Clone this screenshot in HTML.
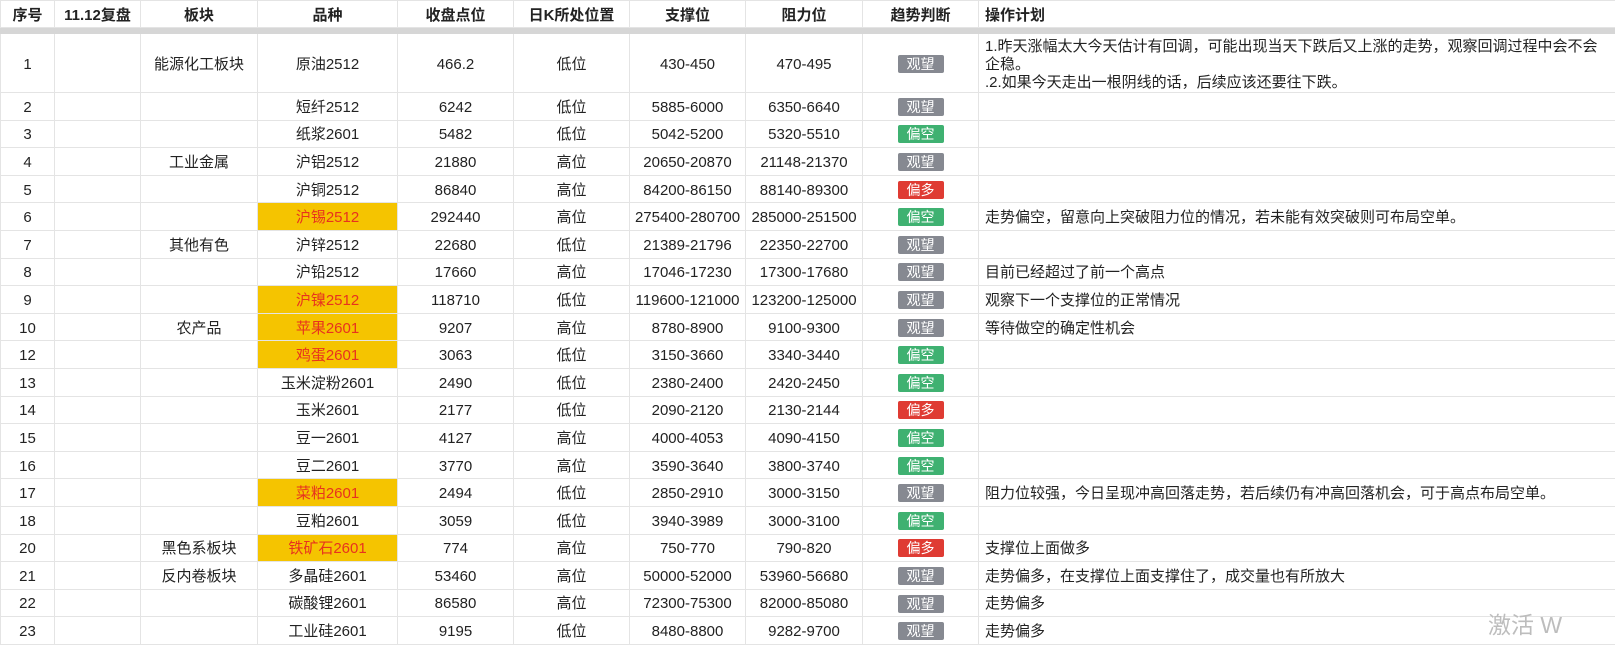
<!DOCTYPE html>
<html><head><meta charset="utf-8">
<style>
html,body{margin:0;padding:0;background:#fff;}
body{width:1615px;height:645px;overflow:hidden;position:relative;font-family:"Liberation Sans","Noto Sans CJK SC",sans-serif;color:#222;}
table{border-collapse:collapse;table-layout:fixed;width:1615px;font-size:15px;}
td,th{border:1px solid #e4e4e4;text-align:center;padding:3px 0 0 0;white-space:nowrap;overflow:hidden;line-height:18px;vertical-align:middle;}
th{height:23px;font-weight:bold;font-size:15px;color:#222;}
th.l,td.l{text-align:left;padding-left:6px;}
tr.sep td{height:5px;padding:0;background:#d6d6d6;border-color:#d6d6d6;line-height:0;font-size:0;}
tr.r td{height:23.6px;}
tr.r1 td{height:55px;}
td.plan{white-space:normal;line-height:18px;font-size:15px;}
.y{background:#f5c400;color:#e8321e;}
.b{display:inline-block;width:46px;height:18px;line-height:18px;border-radius:2px;color:#fff;font-size:14px;vertical-align:middle;position:relative;top:-1px;}
.g{background:#868991}.gr{background:#3fb171}.rd{background:#df3b33}
.wm{position:absolute;left:1488px;top:606px;font-size:23px;color:#bdbdbd;}
</style></head><body>
<table>
<colgroup><col style="width:54px"><col style="width:86px"><col style="width:117px"><col style="width:140px"><col style="width:116px"><col style="width:116px"><col style="width:116px"><col style="width:117px"><col style="width:116px"><col style="width:637px"></colgroup>
<tr><th>序号</th><th>11.12复盘</th><th>板块</th><th>品种</th><th>收盘点位</th><th>日K所处位置</th><th>支撑位</th><th>阻力位</th><th>趋势判断</th><th class="l">操作计划</th></tr>
<tr class="sep"><td></td><td></td><td></td><td></td><td></td><td></td><td></td><td></td><td></td><td></td></tr>
<tr class="r r1"><td>1</td><td></td><td>能源化工板块</td><td>原油2512</td><td>466.2</td><td>低位</td><td>430-450</td><td>470-495</td><td><span class="b g">观望</span></td><td class="l plan">1.昨天涨幅太大今天估计有回调，可能出现当天下跌后又上涨的走势，观察回调过程中会不会<br>企稳。<br>.2.如果今天走出一根阴线的话，后续应该还要往下跌。</td></tr>
<tr class="r"><td>2</td><td></td><td></td><td>短纤2512</td><td>6242</td><td>低位</td><td>5885-6000</td><td>6350-6640</td><td><span class="b g">观望</span></td><td class="l"></td></tr>
<tr class="r"><td>3</td><td></td><td></td><td>纸浆2601</td><td>5482</td><td>低位</td><td>5042-5200</td><td>5320-5510</td><td><span class="b gr">偏空</span></td><td class="l"></td></tr>
<tr class="r"><td>4</td><td></td><td>工业金属</td><td>沪铝2512</td><td>21880</td><td>高位</td><td>20650-20870</td><td>21148-21370</td><td><span class="b g">观望</span></td><td class="l"></td></tr>
<tr class="r"><td>5</td><td></td><td></td><td>沪铜2512</td><td>86840</td><td>高位</td><td>84200-86150</td><td>88140-89300</td><td><span class="b rd">偏多</span></td><td class="l"></td></tr>
<tr class="r"><td>6</td><td></td><td></td><td class="y">沪锡2512</td><td>292440</td><td>高位</td><td>275400-280700</td><td>285000-251500</td><td><span class="b gr">偏空</span></td><td class="l">走势偏空，留意向上突破阻力位的情况，若未能有效突破则可布局空单。</td></tr>
<tr class="r"><td>7</td><td></td><td>其他有色</td><td>沪锌2512</td><td>22680</td><td>低位</td><td>21389-21796</td><td>22350-22700</td><td><span class="b g">观望</span></td><td class="l"></td></tr>
<tr class="r"><td>8</td><td></td><td></td><td>沪铅2512</td><td>17660</td><td>高位</td><td>17046-17230</td><td>17300-17680</td><td><span class="b g">观望</span></td><td class="l">目前已经超过了前一个高点</td></tr>
<tr class="r"><td>9</td><td></td><td></td><td class="y">沪镍2512</td><td>118710</td><td>低位</td><td>119600-121000</td><td>123200-125000</td><td><span class="b g">观望</span></td><td class="l">观察下一个支撑位的正常情况</td></tr>
<tr class="r"><td>10</td><td></td><td>农产品</td><td class="y">苹果2601</td><td>9207</td><td>高位</td><td>8780-8900</td><td>9100-9300</td><td><span class="b g">观望</span></td><td class="l">等待做空的确定性机会</td></tr>
<tr class="r"><td>12</td><td></td><td></td><td class="y">鸡蛋2601</td><td>3063</td><td>低位</td><td>3150-3660</td><td>3340-3440</td><td><span class="b gr">偏空</span></td><td class="l"></td></tr>
<tr class="r"><td>13</td><td></td><td></td><td>玉米淀粉2601</td><td>2490</td><td>低位</td><td>2380-2400</td><td>2420-2450</td><td><span class="b gr">偏空</span></td><td class="l"></td></tr>
<tr class="r"><td>14</td><td></td><td></td><td>玉米2601</td><td>2177</td><td>低位</td><td>2090-2120</td><td>2130-2144</td><td><span class="b rd">偏多</span></td><td class="l"></td></tr>
<tr class="r"><td>15</td><td></td><td></td><td>豆一2601</td><td>4127</td><td>高位</td><td>4000-4053</td><td>4090-4150</td><td><span class="b gr">偏空</span></td><td class="l"></td></tr>
<tr class="r"><td>16</td><td></td><td></td><td>豆二2601</td><td>3770</td><td>高位</td><td>3590-3640</td><td>3800-3740</td><td><span class="b gr">偏空</span></td><td class="l"></td></tr>
<tr class="r"><td>17</td><td></td><td></td><td class="y">菜粕2601</td><td>2494</td><td>低位</td><td>2850-2910</td><td>3000-3150</td><td><span class="b g">观望</span></td><td class="l">阻力位较强，今日呈现冲高回落走势，若后续仍有冲高回落机会，可于高点布局空单。</td></tr>
<tr class="r"><td>18</td><td></td><td></td><td>豆粕2601</td><td>3059</td><td>低位</td><td>3940-3989</td><td>3000-3100</td><td><span class="b gr">偏空</span></td><td class="l"></td></tr>
<tr class="r"><td>20</td><td></td><td>黑色系板块</td><td class="y">铁矿石2601</td><td>774</td><td>高位</td><td>750-770</td><td>790-820</td><td><span class="b rd">偏多</span></td><td class="l">支撑位上面做多</td></tr>
<tr class="r"><td>21</td><td></td><td>反内卷板块</td><td>多晶硅2601</td><td>53460</td><td>高位</td><td>50000-52000</td><td>53960-56680</td><td><span class="b g">观望</span></td><td class="l">走势偏多，在支撑位上面支撑住了，成交量也有所放大</td></tr>
<tr class="r"><td>22</td><td></td><td></td><td>碳酸锂2601</td><td>86580</td><td>高位</td><td>72300-75300</td><td>82000-85080</td><td><span class="b g">观望</span></td><td class="l">走势偏多</td></tr>
<tr class="r"><td>23</td><td></td><td></td><td>工业硅2601</td><td>9195</td><td>低位</td><td>8480-8800</td><td>9282-9700</td><td><span class="b g">观望</span></td><td class="l">走势偏多</td></tr>
</table>
<div class="wm">激活 W</div>
</body></html>
